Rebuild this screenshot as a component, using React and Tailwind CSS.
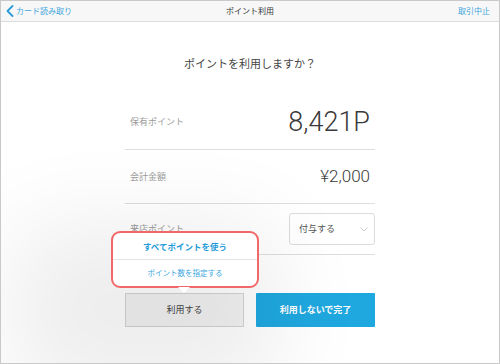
const jp = { fontFamily: '"Noto Sans CJK JP", "Noto Sans", sans-serif' };
const num = { fontFamily: 'Roboto, "Liberation Sans", Arial, sans-serif' };

const Row = ({ label, children, className = "" }) => (
  <div
    className={`flex items-center justify-between border-b border-[#dedede] pl-[5px] pr-[5px] ${className}`}
  >
    <span className="text-[9px] text-[#9b9b9b]">{label}</span>
    {children}
  </div>
);

export default function App() {
  return (
    <div
      className="relative w-[500px] h-[364px] overflow-hidden border border-[#c9c9c9] bg-white flex flex-col"
      style={jp}
    >
      {/* header */}
      <div className="h-[21px] shrink-0 bg-[#f7f7f7] border-b border-[#dcdcdc] flex items-center justify-between px-[5px] relative">
        <div className="flex items-center gap-[2px] text-[8px] text-[#3ea6dd]">
          <svg width="8" height="12" viewBox="0 0 8 12" fill="none">
            <polyline
              points="6.5,1 1.5,6 6.5,11"
              stroke="#2b9bd8"
              strokeWidth="1.8"
              strokeLinecap="round"
              strokeLinejoin="round"
            />
          </svg>
          <span>カード読み取り</span>
        </div>
        <span className="absolute left-1/2 -translate-x-1/2 text-[8px] text-[#333]">
          ポイント利用
        </span>
        <span className="text-[8px] text-[#3ea6dd] pr-[4px]">取引中止</span>
      </div>

      {/* content */}
      <div className="flex-1 flex flex-col items-center">
        <h1 className="mt-[36px] text-[11px] text-[#444] leading-none">
          ポイントを利用しますか？
        </h1>

        <div className="mt-[26px] w-[250px] flex flex-col">
          <Row label="保有ポイント" className="h-[55px]">
            <span className="text-[27px] font-light text-[#3a3a3a] leading-none" style={num}>
              8,421P
            </span>
          </Row>
          <Row label="会計金額" className="h-[54px]">
            <span className="text-[17px] font-light text-[#3a3a3a] leading-none" style={num}>
              ¥2,000
            </span>
          </Row>
          <div className="h-[51px] flex items-center justify-between border-b border-[#dedede] pl-[5px]">
            <span className="text-[9px] text-[#9b9b9b]">来店ポイント</span>
            <div className="w-[86px] h-[32px] rounded-[3px] border border-[#dcdcdc] bg-white flex items-center justify-between pl-[9px] pr-[6px]">
              <span className="text-[9px] text-[#555]">付与する</span>
              <svg width="8" height="5" viewBox="0 0 8 5" fill="none">
                <polyline points="0.5,0.5 4,4 7.5,0.5" stroke="#bbb" strokeWidth="0.8" />
              </svg>
            </div>
          </div>

          <div className="mt-[38px] flex gap-[12px]">
            <button className="w-[119px] h-[34px] bg-[#f3f3f3] border border-[#d4d4d4] text-[9px] text-[#444]">
              利用する
            </button>
            <button className="w-[119px] h-[34px] bg-[#1fa8df] text-[9px] font-bold text-white rounded-[1px]">
              利用しないで完了
            </button>
          </div>
        </div>
      </div>

      {/* popover */}
      <div className="absolute left-[110px] top-[230px] w-[148px]">
        <div className="bg-white border-2 border-[#f26868] rounded-[9px] shadow-[-40px_50px_90px_60px_rgba(0,0,0,0.07)] flex flex-col">
          <div className="h-[27px] flex items-center justify-center border-b border-[#e4e4e4] text-[8.5px] font-bold text-[#1e9ad8]">
            すべてポイントを使う
          </div>
          <div className="h-[26px] flex items-center justify-center text-[7.5px] text-[#3aa6dd]">
            ポイント数を指定する
          </div>
        </div>
        <div className="absolute left-[67px] top-[56px] w-0 h-0 border-l-[6px] border-r-[6px] border-t-[6px] border-l-transparent border-r-transparent border-t-white" />
      </div>
    </div>
  );
}
